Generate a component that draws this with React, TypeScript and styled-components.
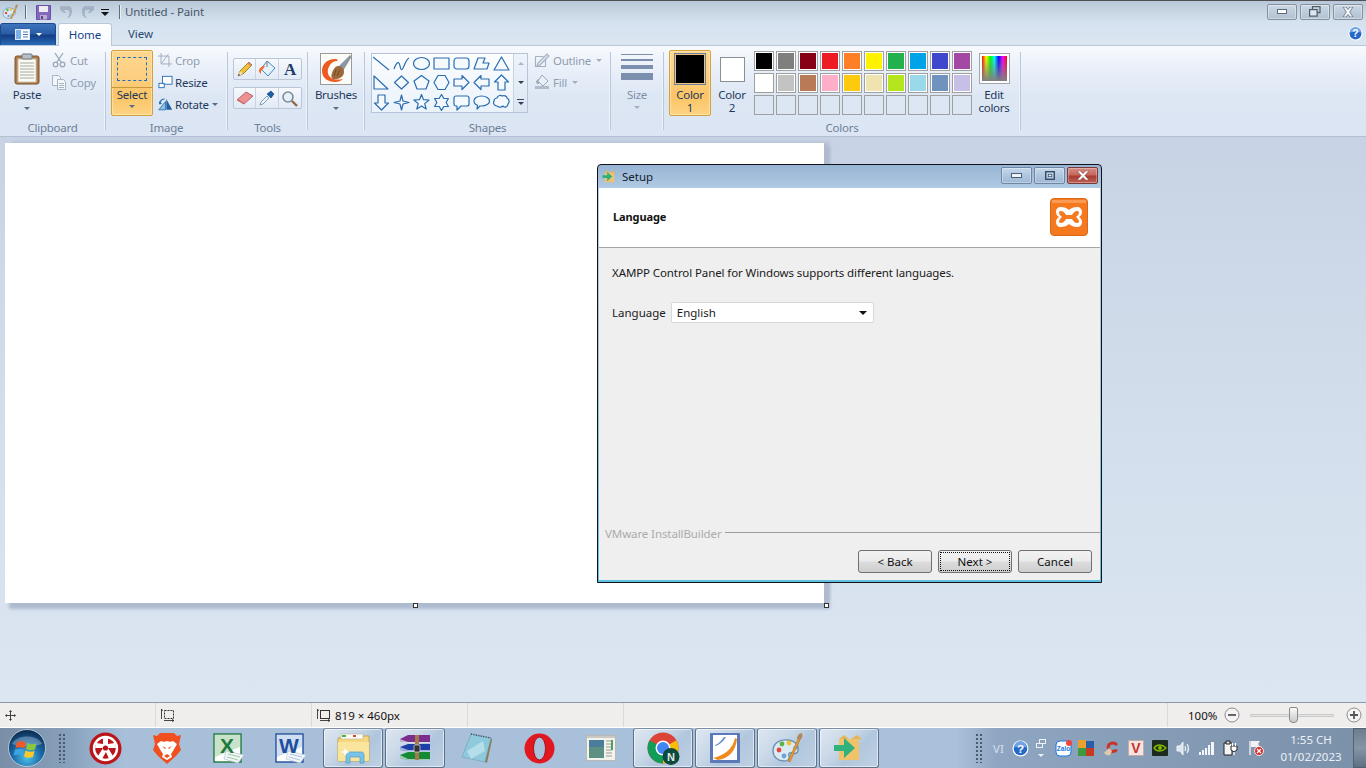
import React from "react";
import styled, { createGlobalStyle } from "styled-components";

const Global = createGlobalStyle`
  html, body { margin: 0; padding: 0; width: 1366px; height: 768px; overflow: hidden; }
  body { font-family: "Noto Sans", "Open Sans", sans-serif; font-size: 11.5px; color: #1e395b; }
  * { box-sizing: border-box; }
  svg { display: block; flex: none; }
`;

const Page = styled.div`
  position: relative; width: 1366px; height: 768px; display: flex; flex-direction: column; overflow: hidden;
`;

/* ---------- title bar ---------- */
const TitleBar = styled.div`
  height: 23px; flex: none; display: flex; align-items: center; padding: 0 3px 0 2px;
  border-top: 1px solid #4f5052;
  background: linear-gradient(180deg, #b9c8d9 0%, #c6d4e2 45%, #d6e2ef 100%);
`;
const QatSep = styled.div<{ $ml: number }>`
  width: 1px; height: 14px; margin-left: ${p => p.$ml}px; background: #5f6d7d; box-shadow: 1px 0 0 #e6eef6;
`;
const QatSlot = styled.div<{ $ml: number; $w?: number }>`
  margin-left: ${p => p.$ml}px; width: ${p => p.$w ?? 15}px; display: flex; justify-content: center;
`;
const WindowTitle = styled.div`
  margin-left: 5px; font-size: 11.5px; color: #46566a; letter-spacing: -0.1px; line-height: 20px;
`;
const WinButtons = styled.div`
  margin-left: auto; display: flex; gap: 3px;
`;
const WinButton = styled.div`
  width: 30px; height: 16px; display: flex; align-items: center; justify-content: center;
  border: 1px solid #84919f; border-radius: 2px; margin-top: -1px;
  background: linear-gradient(180deg, #ccd8e5 0%, #bdcbda 50%, #b2c1d2 100%);
  box-shadow: inset 0 0 0 1px rgba(255,255,255,.35);
`;

/* ---------- tabs ---------- */
const TabRow = styled.div`
  height: 23px; flex: none; display: flex; align-items: flex-end; position: relative;
  background: linear-gradient(180deg, #d6e2ef, #dbe6f3);
  border-bottom: 1px solid #b9c7d9;
`;
const AppButton = styled.div`
  width: 56px; height: 22px; display: flex; align-items: center; justify-content: center; gap: 6px;
  border: 1px solid #1a4a8c; border-bottom: none; border-radius: 3px 3px 0 0;
  background: linear-gradient(180deg, #3c74bd 0%, #2a5da6 45%, #143f87 55%, #2a6bb8 100%);
`;
const HomeTab = styled.div`
  width: 54px; height: 23px; margin: 0 0 -1px 2px; text-align: center; line-height: 22px;
  font-size: 11.5px; color: #15428b; border: 1px solid #b9c7d9; border-bottom: none; border-radius: 3px 3px 0 0;
  background: linear-gradient(180deg, #fff, #f5f9fe);
`;
const ViewTab = styled.div`
  width: 57px; height: 22px; text-align: center; line-height: 22px; font-size: 11.5px; color: #2c4a70;
`;
const HelpSlot = styled.div`
  position: absolute; right: 3px; top: 3px;
`;

/* ---------- ribbon ---------- */
const Ribbon = styled.div`
  height: 91px; flex: none; display: flex; padding-top: 4px; overflow: hidden; letter-spacing: -0.25px;
  background: linear-gradient(180deg, #f7fafe 0%, #eaf0f9 25%, #dde7f4 55%, #dbe5f3 100%);
  border-bottom: 1px solid #b3c0d2;
`;
const Group = styled.div<{ $w: number }>`
  position: relative; width: ${p => p.$w}px; flex: none; height: 85px; display: grid; grid-template-rows: 71px 14px;
  &::after {
    content: ""; position: absolute; right: 0; top: 2px; width: 1px; height: 78px; background: #b9c8da; box-shadow: -1px 0 0 #eef3fa;
  }
`;
const GroupBody = styled.div<{ $pl?: number }>`
  display: flex; align-items: flex-start; padding-left: ${p => p.$pl ?? 0}px;
`;
const GroupLabel = styled.div`
  text-align: center; font-size: 11.5px; line-height: 14px; color: #6d7f97; padding-right: 1px; overflow: hidden;
`;
const LargeButton = styled.div<{ $w: number; $ml?: number; $muted?: boolean }>`
  width: ${p => p.$w}px; margin-left: ${p => p.$ml ?? 0}px; height: 66px; padding-top: 3px;
  display: flex; flex-direction: column; align-items: center;
  color: ${p => (p.$muted ? "#7e8ea6" : "#1e395b")};
`;
const LargeIcon = styled.div<{ $h?: number }>`
  height: ${p => p.$h ?? 32}px; display: flex; align-items: flex-start; justify-content: center;
`;
const LargeLabel = styled.div<{ $mt?: number }>`
  margin-top: ${p => p.$mt ?? 3}px; font-size: 11.5px; line-height: 14px; text-align: center; white-space: nowrap;
`;
const Caret = styled.div<{ $c?: string; $mt?: number; $ml?: number }>`
  width: 0; height: 0; flex: none; margin-top: ${p => p.$mt ?? 5}px; margin-left: ${p => p.$ml ?? 0}px;
  border-left: 3px solid transparent; border-right: 3px solid transparent; border-top: 3px solid ${p => p.$c ?? "#5a6d88"};
`;
const SmallCol = styled.div<{ $ml: number; $w: number }>`
  margin: -1px 0 0 ${p => p.$ml}px; width: ${p => p.$w}px; display: flex; flex-direction: column;
`;
const SmallRow = styled.div<{ $off?: boolean; $gap?: number }>`
  height: 22px; display: flex; align-items: center; gap: ${p => p.$gap ?? 3}px; font-size: 11.5px;
  color: ${p => (p.$off ? "#8f9db1" : "#1e395b")};
`;
const SmallIcon = styled.div`
  width: 18px; display: flex; justify-content: center; flex: none;
`;
const ActiveButton = styled.div<{ $w: number; $ml: number }>`
  width: ${p => p.$w}px; margin-left: ${p => p.$ml}px; height: 66px; display: flex; flex-direction: column; align-items: center;
  border: 1px solid #d3a23c; border-radius: 2px; color: #1e395b;
  background: linear-gradient(180deg, #fdd78d 0%, #fdcf82 40%, #fbc465 70%, #fdd382 100%);
  box-shadow: inset 0 0 0 1px rgba(255,236,190,.6);
`;
const SelectPreview = styled.div`
  width: 30px; height: 24px; margin-top: 6px; border: 1px dashed #1f6fc0;
`;
const SelectSplit = styled.div`
  width: 100%; height: 1px; margin-top: 6px; background: #c9983a;
`;
const ToolCol = styled.div`
  margin: 8px 0 0 5px; display: flex; flex-direction: column; gap: 7px;
`;
const ToolStrip = styled.div`
  width: 69px; height: 22px; display: grid; grid-template-columns: repeat(3, 1fr);
  border: 1px solid #b9c6d8; border-radius: 2px;
  background: linear-gradient(180deg, #f6f9fd, #e2eaf5);
`;
const ToolCell = styled.div`
  display: flex; align-items: center; justify-content: center; border-right: 1px solid #c9d4e3;
  &:last-child { border-right: none; }
`;
const Gallery = styled.div`
  margin: 3px 0 0 6px; width: 157px; height: 60px; display: flex; border: 1px solid #b6c5d9; background: #f2f7fc;
`;
const ShapeGrid = styled.div`
  width: 141px; display: grid; grid-template-columns: repeat(7, 20px); grid-auto-rows: 19.3px;
  background: linear-gradient(180deg, #fbfdff, #eaf2fa);
`;
const ShapeCell = styled.div`
  display: flex; align-items: center; justify-content: center; padding-right: 2px;
`;
const GalleryScroll = styled.div`
  flex: 1; display: grid; grid-template-rows: 1fr 1fr 1fr; border-left: 1px solid #c6d3e3;
  background: linear-gradient(180deg, #eef3fa, #dce6f3);
`;
const ScrollCell = styled.div`
  display: flex; flex-direction: column; gap: 1px; align-items: center; justify-content: center;
`;
const ScrollUp = styled.div`
  width: 0; height: 0; border-left: 3px solid transparent; border-right: 3px solid transparent; border-bottom: 3px solid #a9b5c6;
`;
const ScrollBar = styled.div`
  width: 7px; height: 1px; background: #3a4a60;
`;
const SizeLines = styled.div`
  width: 32px; height: 32px; display: flex; flex-direction: column; gap: 4px; padding-top: 1px;
`;
const SizeLine = styled.div<{ $h: number }>`
  height: ${p => p.$h}px; background: #7c8fae;
`;
const ColorOneSwatch = styled.div`
  width: 32px; height: 32px; margin-top: 2px; background: #000; border: 1px solid #6e7fa0; box-shadow: inset 0 0 0 1px #e8c27a;
`;
const ColorTwoSwatch = styled.div`
  width: 25px; height: 25px; margin-top: 4px; background: #fff; border: 1px solid #8a8f96;
`;
const TwoLine = styled.div<{ $mt: number }>`
  margin-top: ${p => p.$mt}px; font-size: 11.5px; line-height: 13px; text-align: center;
`;
const Palette = styled.div`
  margin: 1px 0 0 3px; display: grid; grid-template-columns: repeat(10, 20px); grid-auto-rows: 20px; gap: 2px;
`;
const Swatch = styled.div<{ $c?: string }>`
  border: 1px solid #a0a0a0; padding: 1px; background: ${p => (p.$c ? "#fff" : "transparent")};
  &::after { content: ""; display: block; width: 100%; height: 100%; background: ${p => p.$c ?? "transparent"}; }
`;
const EditPreview = styled.div`
  width: 29px; height: 29px; border: 2px solid #fff; outline: 1px solid #a2a6ab; margin-top: 1px;
  background:
    linear-gradient(180deg, rgba(128,128,128,0) 0%, rgba(128,128,128,1) 100%),
    linear-gradient(90deg, #f00, #ff0, #0f0, #0ff, #00f, #f0f, #f00);
`;

/* ---------- workspace ---------- */
const Workspace = styled.div`
  flex: 1; position: relative; padding: 6px 5px;
  background: linear-gradient(180deg, #c7d3e4 0%, #d3deec 50%, #dce6f2 100%);
`;
const Paper = styled.div`
  position: relative; width: 819px; height: 460px; background: #fff;
  box-shadow: 5px 5px 3px 1px #aebace, 6px -2px 3px -1px #b3bfd2;
`;
const Handle = styled.div<{ $x: number }>`
  position: absolute; left: ${p => p.$x}px; bottom: -5px; width: 5px; height: 5px; background: #fff; border: 1px solid #333;
`;

/* ---------- dialog (a window on the desktop) ---------- */
const Dialog = styled.div`
  position: absolute; left: 597px; top: 164px; width: 505px; height: 419px; display: flex; flex-direction: column;
  border: 1px solid #101418; border-radius: 4px 4px 0 0; padding: 0 1px 2px 1px;
  background: linear-gradient(180deg, #97b4d3 0%, #b3cce6 6%, #8fc3de 60%, #5fc0e0 100%);
`;
const DialogTitle = styled.div`
  height: 23px; flex: none; display: flex; align-items: center; padding-left: 3px; font-size: 11.5px; color: #14202e;
`;
const DialogTitleText = styled.div`
  margin-left: 5px;
`;
const DlgButtons = styled.div`
  margin-left: auto; margin-right: 2px; margin-top: -2px; display: flex; gap: 2px;
`;
const DlgButton = styled.div<{ $close?: boolean }>`
  width: 31px; height: 17px; display: flex; align-items: center; justify-content: center;
  border: 1px solid ${p => (p.$close ? "#7a3a3a" : "#6f87a3")}; border-radius: 2px;
  background: ${p => p.$close
    ? "linear-gradient(180deg, #d68c84 0%, #c5675d 45%, #a83c33 55%, #bd6257 100%)"
    : "linear-gradient(180deg, #c7d8ea 0%, #aec6df 50%, #9fb9d6 100%)"};
  box-shadow: inset 0 0 0 1px rgba(255,255,255,.3);
`;
const DialogHeader = styled.div`
  height: 60px; flex: none; display: flex; align-items: center; justify-content: space-between; padding: 0 12px 2px 14px;
  background: #fff; border-bottom: 1px solid #a6a6a6;
`;
const HeaderTitle = styled.div`
  font-weight: 700; font-size: 11px; color: #111; letter-spacing: -0.1px;
`;
const DialogBody = styled.div`
  flex: 1; display: flex; flex-direction: column; background: #efefef; color: #1a1a1a; font-size: 11.5px; padding: 17px 0 0 13px;
`;
const BodyText = styled.div`
  line-height: 16px; letter-spacing: -0.1px;
`;
const FormRow = styled.div`
  margin-top: 21px; display: flex; align-items: center; gap: 5px; height: 21px;
`;
const Select = styled.div`
  width: 203px; height: 21px; padding: 0 6px 0 5px; display: flex; align-items: center; justify-content: space-between;
  background: #fff; border: 1px solid #d8d8d8; border-radius: 2px;
`;
const SelectCaret = styled.div`
  width: 0; height: 0; border-left: 4px solid transparent; border-right: 4px solid transparent; border-top: 4px solid #111;
`;
const Brand = styled.div`
  margin-top: auto; margin-left: -7px; display: flex; align-items: center; gap: 3px; height: 16px;
  color: #ababab; font-size: 11.5px; letter-spacing: -0.1px;
`;
const BrandRule = styled.div`
  flex: 1; height: 1px; background: #9c9c9c; margin-top: -2px;
`;
const DialogActions = styled.div`
  display: flex; justify-content: flex-end; gap: 6px; padding: 9px 8px 7px 0; height: 39px;
`;
const DlgAction = styled.div<{ $focus?: boolean }>`
  position: relative; width: 74px; height: 23px; display: flex; align-items: center; justify-content: center;
  border: 1px solid #707070; border-radius: 3px; color: #111; font-size: 11.5px;
  background: linear-gradient(180deg, #f2f2f2 0%, #ebebeb 48%, #dcdcdc 52%, #cfcfcf 100%);
  ${p => p.$focus ? `&::after { content: ""; position: absolute; inset: 1px; border: 1px dotted #111; }` : ""}
`;

/* ---------- status bar ---------- */
const StatusBar = styled.div`
  height: 26px; flex: none; display: flex; background: #f0eded; border-top: 1px solid #8d98a8; border-bottom: 1px solid #fff;
`;
const StatusCell = styled.div<{ $w: number }>`
  width: ${p => p.$w}px; flex: none; display: flex; align-items: center; gap: 4px; padding-left: 5px;
  border-right: 1px solid #dcd9d9; color: #111; font-size: 11.5px;
`;
const ZoomWrap = styled.div`
  flex: 1; display: flex; align-items: center; padding-left: 20px; color: #111; font-size: 11.5px;
`;
const ZoomTrack = styled.div`
  position: relative; width: 84px; height: 3px; margin: 0 12px 0 10px; background: #e6e6e6; border: 1px solid #c9c9c9; border-radius: 1px;
`;
const ZoomThumb = styled.div`
  position: absolute; left: 38px; top: -8px; width: 9px; height: 16px; border: 1px solid #8a8a8a; border-radius: 2px 2px 4px 4px;
  background: linear-gradient(180deg, #fafafa, #c9c9c9);
`;

/* ---------- taskbar ---------- */
const Taskbar = styled.div`
  position: relative; height: 40px; flex: none; display: flex; align-items: stretch;
  background: linear-gradient(90deg, #7a8ea6 0%, #87a0bb 5%, #a7bfd9 9%, #a9c1da 70%, #8ea6c1 73%, #7b90a9 100%);
`;
const StartArea = styled.div`
  width: 74px; flex: none; display: flex; align-items: center; padding-left: 8px;
`;
const Gripper = styled.div<{ $ml: number }>`
  margin-left: ${p => p.$ml}px; width: 8px; height: 30px; flex: none; align-self: center;
  background-image: radial-gradient(circle, #4a5a6e 1px, transparent 1.2px);
  background-size: 4px 4px;
`;
const TaskSlot = styled.div<{ $open?: boolean }>`
  width: 60px; margin: 0 1px; flex: none; display: flex; align-items: center; justify-content: center;
  ${p => p.$open ? `
    border: 1px solid #5f7186; border-top-color: #7d8ea2; border-radius: 3px; box-shadow: inset 0 0 0 1px rgba(255,255,255,.55);
    background: linear-gradient(135deg, rgba(255,255,255,.62) 0%, rgba(255,255,255,.35) 40%, rgba(255,255,255,.1) 60%, rgba(255,255,255,.25) 100%);
  ` : ""}
`;
const Tray = styled.div`
  margin-left: auto; display: flex; align-items: center; color: #e8eef5;
`;
const TrayItem = styled.div<{ $w: number }>`
  width: ${p => p.$w}px; flex: none; display: flex; align-items: center; justify-content: center;
`;
const TrayText = styled.div`
  font-size: 11.5px; color: #d5dfe9;
`;
const TrayStack = styled.div`
  display: flex; flex-direction: column; align-items: center; gap: 6px;
`;
const Clock = styled.div`
  width: 84px; flex: none; text-align: center; font-size: 11.5px; line-height: 17px; color: #eaf0f6;
`;
const ShowDesktop = styled.div`
  width: 13px; align-self: stretch; flex: none; border: 1px solid #55626f; border-right: none;
  background: linear-gradient(180deg, #6b7e90, #8495a6 50%, #5d7083);
`;

/* ---------- icons ---------- */
const BLUE = "#2a6db0";
const Clip = () => (
  <svg width="28" height="32" viewBox="0 0 28 32">
    <rect x="2" y="3" width="24" height="28" rx="2" fill="#b07a4a" stroke="#7a5530" />
    <rect x="5" y="6" width="18" height="23" fill="#fbfbf6" stroke="#c9c2b0" />
    {[10, 13, 16, 19, 22, 25].map(y => <path key={y} d={`M7 ${y}h14`} stroke="#a8a8a0" />)}
    <rect x="9" y="1" width="10" height="5" rx="1" fill="#b9bfc6" stroke="#6e7680" />
  </svg>
);
const Scissors = () => (
  <svg width="14" height="16" viewBox="0 0 14 16" fill="none" stroke="#9aa7b8" strokeWidth="1.3">
    <path d="M3 1l6 9M11 1L5 10" /><circle cx="3.5" cy="12.5" r="2.3" /><circle cx="10.5" cy="12.5" r="2.3" />
  </svg>
);
const CopyIcon = () => (
  <svg width="16" height="16" viewBox="0 0 16 16" fill="#f2f5f9" stroke="#a9b4c3">
    <path d="M1.5 1.5h6l2 2v8h-8z" /><path d="M6.5 5.5h6l2 2v8h-8z" />
    <path d="M8 9.5h5M8 11.5h5M8 13.5h5" />
  </svg>
);
const CropIcon = () => (
  <svg width="14" height="14" viewBox="0 0 16 16" fill="none" stroke="#9aa7b8" style={{ marginRight: 2 }}>
    <path d="M3.5 0v12.5H16M0 3.5h12.5V16M12 1L4 12" />
  </svg>
);
const ResizeIcon = () => (
  <svg width="15" height="14" viewBox="0 0 16 16" fill="#fff" stroke="#1f66ad" style={{ marginRight: 2 }}>
    <rect x="4.5" y="1.5" width="11" height="9" /><rect x="0.5" y="9.5" width="6" height="5" />
  </svg>
);
const RotateIcon = () => (
  <svg width="15" height="14" viewBox="0 0 18 16" style={{ marginRight: 2 }}>
    <path d="M1 15L9 5v10z" fill="#8fc0e6" stroke="#2a6db0" />
    <path d="M10 15V2l7 13z" fill="#1f5f9f" />
    <path d="M2 8C2 4 5 2 8 2" stroke="#2a6db0" fill="none" strokeWidth="1.4" />
    <path d="M1 5l1 4 3-2z" fill="#2a6db0" />
  </svg>
);
const Pencil = () => (
  <svg width="16" height="16" viewBox="0 0 16 16">
    <path d="M1 15l2-5L12 1l3 3-9 9z" fill="#f2c230" stroke="#8a6d22" strokeWidth=".8" />
    <path d="M1 15l2-5 3 3z" fill="#f3dfbb" /><path d="M1 15l1-2 1 1z" fill="#222" />
    <path d="M12 1l3 3-1.4 1.4-3-3z" fill="#d9826e" />
  </svg>
);
const Bucket = () => (
  <svg width="18" height="18" viewBox="0 0 18 18">
    <path d="M9 1l8 7-7 8-7-7z" fill="#e4f0fa" stroke="#4a86bd" />
    <path d="M1 11c0-3 3-5 6-5l-2 3-2 2v3c-1-1-2-2-2-3z" fill="#f2672a" />
    <path d="M9 1v6" stroke="#6f7f90" />
  </svg>
);
const LetterA = () => (
  <svg width="18" height="18" viewBox="0 0 18 18">
    <text x="9" y="15" textAnchor="middle" fontFamily="Liberation Serif, serif" fontWeight="700" fontSize="17" fill="#1e3a68">A</text>
  </svg>
);
const Eraser = () => (
  <svg width="18" height="14" viewBox="0 0 18 14">
    <path d="M1 9l9-8 7 4-9 8z" fill="#ee8f92" stroke="#b5676c" />
    <path d="M1 9l7 4v-1L1.5 8z" fill="#c96a6e" />
  </svg>
);
const Dropper = () => (
  <svg width="16" height="16" viewBox="0 0 16 16">
    <path d="M1 15l1-3 6-6 2 2-6 6z" fill="#eef6fc" stroke="#7d9cb8" />
    <path d="M8 4l4-3 3 3-3 4z" fill="#1d5fa8" stroke="#123f76" strokeWidth=".6" />
  </svg>
);
const Magnifier = () => (
  <svg width="17" height="17" viewBox="0 0 17 17">
    <circle cx="7" cy="7" r="5" fill="#e4f0f8" stroke="#7d8b99" strokeWidth="1.6" />
    <path d="M11 11l5 5" stroke="#8a6a44" strokeWidth="2.4" />
  </svg>
);
const Brushes = () => (
  <svg width="32" height="32" viewBox="0 0 32 32">
    <rect x=".5" y=".5" width="31" height="31" fill="#fbfbf8" stroke="#9a9a9a" />
    <path d="M15 6C7 6 2 11 2 18c0 7 6 11 13 11 3 0 6-1 8-3-5 1-10 1-13-2-3-3-3-8 0-12 2-3 4-4 7-4 1 0 1-2-2-2z" fill="#ee5b20" />
    <path d="M18 14L30 2l1.500 2L23 18z" fill="#8b97a5" />
    <path d="M18 13c3 0 6 2 6 6 0 5-6 8-11 7-2-1-2-3-1-6s3-7 6-7z" fill="#9c6a3a" />
    <path d="M16 17l-2 6M20 17l-3 6" stroke="#6e4620" strokeWidth=".9" />
  </svg>
);
const OutlineIcon = () => (
  <svg width="16" height="16" viewBox="0 0 16 16" fill="none" stroke="#a3b0c1" strokeWidth="1.1">
    <path d="M1.5 4.5h8M1.5 4.5v10h10v-7" /><path d="M3 14l1-3 9-9 2 2-9 9z" fill="#dde5ef" />
  </svg>
);
const FillIcon = () => (
  <svg width="16" height="16" viewBox="0 0 16 16">
    <path d="M1 15h14v-3H1z" fill="#b0bccb" /><path d="M8 1l6 6-5 5-5-5z" fill="#e9eff6" stroke="#9aa8ba" />
    <path d="M2 8c0-2 2-3 3-3v5c-2 0-3 0-3-2z" fill="#a3b0c1" />
  </svg>
);
const AppMenu = () => (
  <svg width="15" height="11" viewBox="0 0 15 11">
    <rect x=".5" y=".5" width="14" height="10" fill="#fff" stroke="#dce8f5" />
    <rect x="1" y="1" width="5" height="9" fill="#7fb0e5" />
    <path d="M8 3h5M8 5.5h5M8 8h5" stroke="#4e78ad" />
  </svg>
);
const PaintApp = ({ s = 16 }: { s?: number }) => (
  <svg width={s} height={s} viewBox="0 0 32 32">
    <path d="M2 19C2 11 9 7 17 8c8 1 11 6 10 11-1 3-4 3-6 2-3-1-4 1-3 3 1 3-1 5-5 5C7 29 2 25 2 19z" fill="#dbe9f3" stroke="#6b93b5" strokeWidth="1.4" />
    <circle cx="8" cy="18" r="2.4" fill="#e0483f" /><circle cx="11" cy="12" r="2.4" fill="#59b24a" />
    <circle cx="18" cy="11" r="2.4" fill="#efc22d" /><circle cx="24" cy="16" r="1.8" fill="#4f8fd0" />
    <circle cx="13" cy="24" r="2.4" fill="#6aa5d5" />
    <path d="M17 29L27 7l2 1-10 22z" fill="#e79a2b" stroke="#a5681a" strokeWidth=".5" />
    <path d="M26 7c0-3 2-6 5-6 1 3 0 6-2 7z" fill="#b08a5c" />
  </svg>
);
const Save = () => (
  <svg width="15" height="15" viewBox="0 0 15 15">
    <path d="M.5.5h14v14H.5z" fill="#8468bd" stroke="#6a50a3" />
    <rect x="3" y="1" width="9" height="6" fill="#efeaf7" />
    <rect x="4" y="10" width="7" height="4.5" fill="#b9adcf" /><rect x="5" y="11" width="2" height="3" fill="#5b458f" />
  </svg>
);
const Undo = ({ flip }: { flip?: boolean }) => (
  <svg width="14" height="14" viewBox="0 0 14 14" style={flip ? { transform: "scaleX(-1)" } : undefined}>
    <path d="M1 1h8c3 0 4 2 4 5 0 4-2 7-5 7 2-2 3-4 2-7-.4-1-1-1-3-1H5l2 3H5L1 5z" fill="#a3b2c5" />
  </svg>
);
const QatDrop = () => (
  <svg width="8" height="7" viewBox="0 0 8 7">
    <path d="M0 0h8v1H0zM0 3h8L4 7z" fill="#111" />
  </svg>
);
const Help = ({ s = 15 }: { s?: number }) => (
  <svg width={s} height={s} viewBox="0 0 16 16">
    <circle cx="8" cy="8" r="7.5" fill="#fff" />
    <circle cx="8" cy="8" r="6.4" fill="#2468c8" />
    <path d="M2 7a6 6 0 0 1 12 0c-3-1-8-1-12 0z" fill="#6fa3e6" />
    <text x="8" y="12" textAnchor="middle" fontFamily="Liberation Sans, sans-serif" fontWeight="700" fontSize="11" fill="#fff">?</text>
  </svg>
);

const star = (n: number, R: number, r: number) => {
  const pts: string[] = [];
  for (let i = 0; i < n * 2; i++) {
    const a = -Math.PI / 2 + (i * Math.PI) / n;
    const q = i % 2 ? r : R;
    pts.push(`${(8.5 + q * Math.cos(a)).toFixed(1)},${(8.5 + q * Math.sin(a)).toFixed(1)}`);
  }
  return pts.join(" ");
};
const shapes: React.ReactNode[] = [
  <path d="M0 2l16 13" />,
  <path d="M1 14c3-8 5-8 6-3s2 5 4 0 3-7 5-8" />,
  <ellipse cx="8.5" cy="8.5" rx="8" ry="6" />,
  <rect x="1" y="3" width="15" height="11" />,
  <rect x="1" y="3" width="15" height="11" rx="3" />,
  <path d="M1 14L5 3h7l-2 5h6l-2 6z" />,
  <path d="M8.5 2L16 15H1z" />,
  <path d="M1 2v13h14z" />,
  <path d="M8.5 2l7 6.5-7 6.5-7-6.5z" />,
  <path d="M8.5 1.5L16 7l-3 8H4L1 7z" />,
  <path d="M5 1.500h7L16 8.500l-4 7H5l-4-7z" />,
  <path d="M1 5h8V1.500l7 7-7 7V12H1z" />,
  <path d="M16 5H8V1.500l-7 7 7 7V12h8z" />,
  <path d="M5 16V8H1.500l7-7 7 7H12v8z" />,
  <path d="M5 1v8H1.500l7 7 7-7H12V1z" />,
  <path d="M8.500 1L10 7l6 1.500-6 1.500-1.500 6L7 10l-6-1.500L7 7z" />,
  <polygon points={star(5, 8, 3.4)} />,
  <polygon points={star(6, 8, 4.6)} />,
  <path d="M3 2h11a2 2 0 0 1 2 2v6a2 2 0 0 1-2 2H8l-4 4v-4H3a2 2 0 0 1-2-2V4a2 2 0 0 1 2-2z" />,
  <path d="M8.500 2c4.400 0 8 2.200 8 5s-3.600 5-8 5H7l-3 3 .5-3.700C2.400 10.500 1 9 1 7c0-2.800 3-5 7.500-5z" />,
  <path d="M4 4c1-3 4-3 5-2 2-1 5 0 5 2 2 1 3 4 1 6 0 3-4 4-5 2-2 2-5 1-6 0-3 0-4-3-3-5 0-2 2-3 3-3z" />,
];
const Shape = ({ i }: { i: number }) => (
  <svg width="17" height="17" viewBox="0 0 17 17" fill="#f4f9fd" stroke={BLUE} strokeWidth="1.200" strokeLinejoin="round">
    {shapes[i]}
  </svg>
);

const row1 = ["#000000", "#7f7f7f", "#880015", "#ed1c24", "#ff7f27", "#fff200", "#22b14c", "#00a2e8", "#3f48cc", "#a349a4"];
const row2 = ["#ffffff", "#c3c3c3", "#b97a57", "#ffaec9", "#ffc90e", "#efe4b0", "#b5e61d", "#99d9ea", "#7092be", "#c8bfe7"];

const MoveGlyph = () => (
  <svg width="11" height="11" viewBox="0 0 11 11" fill="#333" stroke="#333" strokeWidth=".9">
    <path d="M5.500 1v9M1 5.500h9" fill="none" />
    <path d="M5.500 0l1.500 2H4zM5.500 11l1.500-2H4zM0 5.500L2 4v3zM11 5.500L9 4v3z" stroke="none" />
  </svg>
);
const SelGlyph = ({ dashed }: { dashed?: boolean }) => (
  <svg width="14" height="13" viewBox="0 0 14 13" fill="none" stroke="#333">
    <rect x="3.500" y="1.500" width="9" height="8" strokeDasharray={dashed ? "2 1" : undefined} />
    <path d="M.5 0v10M0 2l.5-2 1 2M3 11.500h10M11 10.500l2 1-2 1" strokeWidth=".9" />
  </svg>
);

/* taskbar logos */
const Orb = () => (
  <svg width="38" height="38" viewBox="0 0 38 38">
    <defs>
      <radialGradient id="orbG" cx="50%" cy="75%" r="70%">
        <stop offset="0" stopColor="#4fc3ea" /><stop offset=".55" stopColor="#1a6aa8" /><stop offset="1" stopColor="#0d2f55" />
      </radialGradient>
    </defs>
    <circle cx="19" cy="19" r="18.500" fill="url(#orbG)" stroke="#c9d7e4" strokeWidth=".8" />
    <path d="M4 15c4-10 26-10 30 0-8 3-22 3-30 0z" fill="#ffffff" opacity=".28" />
    <path d="M9 13c3-1 6-1 9 .5l-1.500 6c-3-1.500-6-1.500-9-.5z" fill="#ef5a2a" />
    <path d="M19.500 14c3 1.500 6 1.500 9 .5l-1.500 6c-3 1-6 1-9-.5z" fill="#8cc63f" />
    <path d="M7 20.500c3-1 6-1 9 .5l-1.500 6c-3-1.500-6-1.500-9-.5z" fill="#3da3e0" />
    <path d="M17.500 21.500c3 1.500 6 1.500 9 .5l-1.500 6c-3 1-6 1-9-.5z" fill="#fbc92c" />
  </svg>
);
const RedCircle = () => (
  <svg width="33" height="33" viewBox="0 0 33 33">
    <circle cx="16.500" cy="16.500" r="16" fill="#bb1519" />
    <circle cx="16.500" cy="16.500" r="11.500" fill="none" stroke="#fff" strokeWidth="2.400" />
    <path d="M14 5h5v7l7-1 1 5h-8l5 8-4 3-3-7-4 7-4-3 5-8H6l1-5 7 1z" fill="#fff" />
    <circle cx="16.500" cy="16" r="2.600" fill="#bb1519" />
  </svg>
);
const Brave = () => (
  <svg width="28" height="32" viewBox="0 0 28 32">
    <path d="M7 1h14l3 3 4-1-2 9 2 6-5 6-9 8-9-8-5-6 2-6-2-9 4 1z" fill="#f0501f" />
    <path d="M8 9c2 1 4 1 6 0 2 1 4 1 6 0l4 3-4 7-2 3 1 3-5 3-5-3 1-3-2-3-4-7z" fill="#fff" />
    <path d="M9 14l4 2-1 1zM19 14l-4 2 1 1zM11 24l3-2 3 2-3 2z" fill="#f0501f" />
  </svg>
);
const OfficeDoc = ({ letter, c, c2 }: { letter: string; c: string; c2: string }) => (
  <svg width="32" height="31" viewBox="0 0 32 31">
    <rect x="1" y="1" width="27" height="28" fill="#fff" stroke={c} strokeWidth="1.400" />
    <path d="M2 2h25v12L2 24z" fill={c2} opacity=".55" />
    <path d="M13 18l18 4-6 8-14-4z" fill="#f3f6f8" stroke="#b9c5cf" strokeWidth=".7" />
    <path d="M15 21l12 3M14 24l11 3" stroke={c2} />
    <text x="14" y="20" textAnchor="middle" fontFamily="Liberation Sans, sans-serif" fontWeight="700" fontSize="21" fill={c}>{letter}</text>
  </svg>
);
const Folder = () => (
  <svg width="33" height="31" viewBox="0 0 33 31">
    <path d="M1 5h9l2-2h20v25H1z" fill="#f5d77e" stroke="#c9a64a" />
    <rect x="4" y="1" width="22" height="5" fill="#fdfdf5" stroke="#b9b39a" strokeWidth=".6" />
    <rect x="5" y="2" width="4" height="2" fill="#4bb04a" /><rect x="16" y="2" width="3" height="2" fill="#d8483a" />
    <path d="M1 9h31v19H1z" fill="#fbe7a3" opacity=".9" />
    <path d="M9 30v-8c0-2 1-3 3-3h12c2 0 3 1 3 3v8h-4v-6H13v6z" fill="#79c4e6" stroke="#4a9ac4" strokeWidth=".7" />
    <path d="M8 15l2 3 3 1-3 1-2 3-1-3-3-1 3-1z" fill="#fff" />
  </svg>
);
const WinRar = () => (
  <svg width="32" height="26" viewBox="0 0 32 26">
    <path d="M1 4l8-4h22v7H9L1 7z" fill="#7b2e8c" />
    <path d="M1 12l8-3h22v7H9l-8-1z" fill="#1c3fa8" /><path d="M1 20l8-3h22v8H9l-8-2z" fill="#148a34" />
    <path d="M1 4v3l8 1h22v-1H9zM1 12v3l8 1h22v-1H9zM1 20v3l8 2h22v-1H9z" fill="#dfe3ea" opacity=".7" />
    <rect x="16" y="0" width="4" height="25" fill="#a47a4a" /><rect x="15" y="10" width="6" height="7" rx="1" fill="#333" stroke="#ddd" strokeWidth=".7" />
  </svg>
);
const Notepad = () => (
  <svg width="32" height="30" viewBox="0 0 32 30">
    <path d="M10 1l20 4-6 24L1 24z" fill="#8ec9dc" stroke="#6c9fb3" strokeWidth=".6" />
    <path d="M24 29l6-24 1 2-5 23z" fill="#8a7d5a" />
    <path d="M10 1l20 4" stroke="#445" strokeWidth="1.500" strokeDasharray="1 1.500" />
    <path d="M6 18L22 8l2 10-14 8z" fill="#d0ecf3" opacity=".6" />
  </svg>
);
const Opera = () => (
  <svg width="31" height="31" viewBox="0 0 31 31">
    <ellipse cx="15.500" cy="15.500" rx="15" ry="15" fill="#e2171f" />
    <ellipse cx="15.500" cy="15.500" rx="6" ry="11.500" fill="#a9c1da" />
    <ellipse cx="15.500" cy="15.500" rx="6" ry="11.500" fill="none" stroke="#a80f16" strokeWidth="1" />
  </svg>
);
const WindowApp = () => (
  <svg width="30" height="26" viewBox="0 0 30 26">
    <rect x=".5" y=".5" width="29" height="25" fill="#f3f3ee" stroke="#b9b9b2" />
    <rect x="1" y="1" width="28" height="2" fill="#c9c9c2" />
    <path d="M3 5h15v18H3z" fill="#5d8f82" /><path d="M3 5h15v7H3z" fill="#4a7c9c" />
    <path d="M20 6h6M20 9h6M20 12h6M20 15h6M20 18h6M20 21h6" stroke="#9a9a92" />
    <rect x="25" y="5" width="2" height="10" fill="#4ca060" />
  </svg>
);
const Chrome = () => (
  <svg width="33" height="33" viewBox="0 0 33 33">
    <circle cx="16" cy="16" r="15.500" fill="#db4437" />
    <path d="M16 16L29.400 8.300A15.500 15.500 0 0 1 16 31.500z" fill="#fbbc05" />
    <path d="M16 16L16 31.500A15.500 15.500 0 0 1 2.600 8.300z" fill="#0f9d58" />
    <circle cx="16" cy="16" r="7.500" fill="#fff" /><circle cx="16" cy="16" r="6" fill="#4285f4" />
    <circle cx="24" cy="24.500" r="8.500" fill="#0d4a3e" />
    <text x="24" y="28.500" textAnchor="middle" fontFamily="Liberation Sans, sans-serif" fontWeight="700" fontSize="11" fill="#dfe8e4">N</text>
  </svg>
);
const Foxit = () => (
  <svg width="32" height="32" viewBox="0 0 32 32">
    <rect x="1" y="1" width="30" height="30" rx="1" fill="#5b78b8" />
    <rect x="4" y="3" width="24" height="25" fill="#fff" />
    <path d="M4 26C14 24 24 17 26 6l2 1c-1 11-8 20-19 21z" fill="#f08a1d" />
    <path d="M6 14c4-1 8-4 11-9l-2 0C12 9 9 12 6 13z" fill="#6c8fc5" />
  </svg>
);
const Installer = ({ s = 32 }: { s?: number }) => (
  <svg width={s} height={s * 0.85} viewBox="0 0 32 27">
    <path d="M6 5h20v21H6z" fill="#f0c36a" />
    <path d="M6 5l5-4 5 4zM18 5l6-4 5 4z" fill="#e7b557" />
    <path d="M0 10h10V3l11 10-11 10v-7H0z" fill="#2fb27c" transform="translate(1 1)" />
  </svg>
);
const XamppLogo = () => (
  <svg width="38" height="38" viewBox="0 0 38 38">
    <rect x=".5" y=".5" width="37" height="37" rx="3.500" fill="#f5791f" stroke="#d9691a" />
    <path d="M2 2h34v3H2z" fill="#fb9a52" />
    <path fill="#fff" d="M6 14c0-3 2-5 5-5 3 0 6 1 8 3 2-2 5-3 8-3 3 0 5 2 5 5 0 2-1 4-3 5 2 1 3 3 3 5 0 3-2 5-5 5-3 0-6-1-8-3-2 2-5 3-8 3-3 0-5-2-5-5 0-2 1-4 3-5-2-1-3-3-3-5z" />
    <path fill="#f5791f" d="M11 13c2 0 4 2 5 4h6c1-2 3-4 5-4 1.500 0 2 1 2 1.500 0 2-2 3.500-3 4.500 1 1 3 2.500 3 4.500 0 .5-.5 1.500-2 1.500-2 0-4-2-5-4h-6c-1 2-3 4-5 4-1.500 0-2-1-2-1.500 0-2 2-3.500 3-4.500-1-1-3-2.500-3-4.500 0-.5.5-1.500 2-1.500z" />
  </svg>
);
const Zalo = () => (
  <svg width="18" height="18" viewBox="0 0 18 18">
    <rect x="1" y="2" width="15" height="15" rx="4" fill="#fff" stroke="#1a78e0" />
    <text x="8.500" y="12" textAnchor="middle" fontFamily="Liberation Sans, sans-serif" fontWeight="700" fontSize="6.500" fill="#1a78e0">Zalo</text>
    <circle cx="14" cy="4" r="3" fill="#f0443a" />
  </svg>
);
const Avg = () => (
  <svg width="17" height="17" viewBox="0 0 17 17">
    <rect x="0" y="0" width="8" height="8" fill="#e8a22c" /><rect x="8" y="1" width="8" height="7" fill="#2a5ea8" />
    <rect x="0" y="8" width="8" height="8" fill="#3e9a3e" /><rect x="8" y="8" width="8" height="8" fill="#c43a22" />
  </svg>
);
const CCleaner = () => (
  <svg width="17" height="17" viewBox="0 0 17 17">
    <path d="M15 4C12 0 6 1 4 5c-1 4 1 8 6 8 2 0 4-1 5-3l-3-1c-1 1-2 1-3 1-2 0-3-2-2-4s4-2 6 0z" fill="#c9342a" />
    <path d="M1 13l5-5 3 3-2 4c-2 1-4 0-6-2z" fill="#e2c9a8" />
  </svg>
);
const VIcon = () => (
  <svg width="16" height="16" viewBox="0 0 16 16">
    <rect x=".5" y=".5" width="15" height="15" fill="#f4e5e2" stroke="#c9a9a5" />
    <text x="8" y="13" textAnchor="middle" fontFamily="Liberation Sans, sans-serif" fontWeight="700" fontSize="14" fill="#c9302a">V</text>
  </svg>
);
const Nvidia = () => (
  <svg width="16" height="16" viewBox="0 0 16 16">
    <rect width="16" height="16" rx="1" fill="#1d2a20" />
    <path d="M2 8c3-4 8-4 12 0-4 4-9 4-12 0z" fill="none" stroke="#7fb800" strokeWidth="1.400" />
    <circle cx="8" cy="8" r="2" fill="#7fb800" />
  </svg>
);
const Speaker = () => (
  <svg width="15" height="15" viewBox="0 0 15 15" fill="none" stroke="#f0f3f7">
    <path d="M1 5h3l3-4v13l-3-4H1z" fill="#dfe5ec" /><path d="M9 5c1 2 1 3 0 5M11 3c2 3 2 6 0 9" strokeWidth="1.200" />
  </svg>
);
const Signal = () => (
  <svg width="16" height="13" viewBox="0 0 16 13" fill="#f3f6f9">
    <rect x="0" y="10" width="2" height="3" /><rect x="3" y="8" width="2" height="5" /><rect x="6" y="6" width="2" height="7" />
    <rect x="9" y="3" width="2" height="10" /><rect x="12" y="0" width="3" height="13" />
  </svg>
);
const Plug = () => (
  <svg width="16" height="16" viewBox="0 0 16 16">
    <path d="M1 3h8v12H1z" fill="#f5f5f5" stroke="#222" /><path d="M3 1h4v3H3z" fill="#ddd" stroke="#222" />
    <path d="M8 6h6v4l-3 2-3-2z" fill="#fff" stroke="#222" /><path d="M9.500 3v3M12.500 3v3M11 12v3" stroke="#fff" strokeWidth="1.300" />
  </svg>
);
const FlagX = () => (
  <svg width="16" height="16" viewBox="0 0 16 16">
    <path d="M2 1v14" stroke="#eee" strokeWidth="1.400" /><path d="M3 1h9l-2 3 2 3H3z" fill="#f2f2f2" />
    <circle cx="11" cy="11" r="4.500" fill="#d42b2b" stroke="#eee" /><path d="M9 9l4 4M13 9l-4 4" stroke="#fff" strokeWidth="1.300" />
  </svg>
);
const TrayWindows = () => (
  <svg width="10" height="9" viewBox="0 0 10 9" fill="none" stroke="#eef2f6">
    <rect x="3.500" y=".5" width="6" height="4" /><rect x=".5" y="4.500" width="6" height="4" />
  </svg>
);

export default function App() {
  return (
    <Page>
      <Global />
      <TitleBar>
        <PaintApp />
        <QatSep $ml={7} />
        <QatSlot $ml={10}><Save /></QatSlot>
        <QatSlot $ml={7}><Undo /></QatSlot>
        <QatSlot $ml={7}><Undo flip /></QatSlot>
        <QatSlot $ml={2} $w={16}><QatDrop /></QatSlot>
        <QatSep $ml={6} />
        <WindowTitle>Untitled - Paint</WindowTitle>
        <WinButtons>
          <WinButton><svg width="10" height="5" viewBox="0 0 10 5"><rect x=".5" y=".5" width="9" height="4" fill="#fff" stroke="#5d6b7a" /></svg></WinButton>
          <WinButton><svg width="12" height="11" viewBox="0 0 12 11" fill="none" stroke="#4d5a68" strokeWidth="1.200"><rect x="3.500" y=".6" width="7.500" height="6" /><rect x=".6" y="3.600" width="7.500" height="6.500" fill="#dfe6ee" /></svg></WinButton>
          <WinButton><svg width="12" height="10" viewBox="0 0 12 10"><path d="M1 0h3l2 2.500L8 0h3L7.700 5 11 10H8L6 7.500 4 10H1l3.300-5z" fill="#f5f7f9" stroke="#5d6b7a" strokeWidth=".8" /></svg></WinButton>
        </WinButtons>
      </TitleBar>

      <TabRow>
        <AppButton>
          <AppMenu />
          <Caret $c="#fff" $mt={0} />
        </AppButton>
        <HomeTab>Home</HomeTab>
        <ViewTab>View</ViewTab>
        <HelpSlot><Help /></HelpSlot>
      </TabRow>

      <Ribbon>
        <Group $w={106}>
          <GroupBody $pl={5}>
            <LargeButton $w={44}>
              <LargeIcon><Clip /></LargeIcon>
              <LargeLabel>Paste</LargeLabel>
              <Caret />
            </LargeButton>
            <SmallCol $ml={1} $w={52}>
              <SmallRow $off $gap={2}><SmallIcon><Scissors /></SmallIcon>Cut</SmallRow>
              <SmallRow $off $gap={2}><SmallIcon><CopyIcon /></SmallIcon>Copy</SmallRow>
            </SmallCol>
          </GroupBody>
          <GroupLabel>Clipboard</GroupLabel>
        </Group>

        <Group $w={122}>
          <GroupBody $pl={5}>
            <ActiveButton $w={42} $ml={0}>
              <SelectPreview />
              <SelectSplit />
              <LargeLabel $mt={0}>Select</LargeLabel>
              <Caret $mt={3} />
            </ActiveButton>
            <SmallCol $ml={4} $w={68}>
              <SmallRow $off $gap={0}><SmallIcon><CropIcon /></SmallIcon>Crop</SmallRow>
              <SmallRow $gap={0}><SmallIcon><ResizeIcon /></SmallIcon>Resize</SmallRow>
              <SmallRow $gap={0}><SmallIcon><RotateIcon /></SmallIcon>Rotate<Caret $mt={0} $ml={3} /></SmallRow>
            </SmallCol>
          </GroupBody>
          <GroupLabel>Image</GroupLabel>
        </Group>

        <Group $w={80}>
          <GroupBody>
            <ToolCol>
              <ToolStrip>
                <ToolCell><Pencil /></ToolCell>
                <ToolCell><Bucket /></ToolCell>
                <ToolCell><LetterA /></ToolCell>
              </ToolStrip>
              <ToolStrip>
                <ToolCell><Eraser /></ToolCell>
                <ToolCell><Dropper /></ToolCell>
                <ToolCell><Magnifier /></ToolCell>
              </ToolStrip>
            </ToolCol>
          </GroupBody>
          <GroupLabel>Tools</GroupLabel>
        </Group>

        <Group $w={57}>
          <GroupBody $pl={1}>
            <LargeButton $w={54}>
              <LargeIcon><Brushes /></LargeIcon>
              <LargeLabel>Brushes</LargeLabel>
              <Caret />
            </LargeButton>
          </GroupBody>
          <GroupLabel />
        </Group>

        <Group $w={246}>
          <GroupBody>
            <Gallery>
              <ShapeGrid>
                {shapes.map((_, i) => <ShapeCell key={i}><Shape i={i} /></ShapeCell>)}
              </ShapeGrid>
              <GalleryScroll>
                <ScrollCell><ScrollUp /></ScrollCell>
                <ScrollCell><Caret $c="#2f3f55" $mt={0} /></ScrollCell>
                <ScrollCell><ScrollBar /><Caret $c="#2f3f55" $mt={1} /></ScrollCell>
              </GalleryScroll>
            </Gallery>
            <SmallCol $ml={5} $w={76}>
              <SmallRow $off $gap={2}><SmallIcon><OutlineIcon /></SmallIcon>Outline<Caret $c="#a3b0c1" $mt={0} $ml={3} /></SmallRow>
              <SmallRow $off $gap={2}><SmallIcon><FillIcon /></SmallIcon>Fill<Caret $c="#a3b0c1" $mt={0} $ml={3} /></SmallRow>
            </SmallCol>
          </GroupBody>
          <GroupLabel>Shapes</GroupLabel>
        </Group>

        <Group $w={53}>
          <GroupBody $pl={2}>
            <LargeButton $w={48} $muted>
              <SizeLines>
                <SizeLine $h={1} /><SizeLine $h={2} /><SizeLine $h={4} /><SizeLine $h={7} />
              </SizeLines>
              <LargeLabel>Size</LargeLabel>
              <Caret $c="#a3b0c1" $mt={4} />
            </LargeButton>
          </GroupBody>
          <GroupLabel />
        </Group>

        <Group $w={357}>
          <GroupBody $pl={5}>
            <ActiveButton $w={42} $ml={0}>
              <ColorOneSwatch />
              <TwoLine $mt={3}>Color<br />1</TwoLine>
            </ActiveButton>
            <LargeButton $w={38} $ml={2}>
              <ColorTwoSwatch />
              <TwoLine $mt={6}>Color<br />2</TwoLine>
            </LargeButton>
            <Palette>
              {row1.map(c => <Swatch key={c} $c={c} />)}
              {row2.map(c => <Swatch key={c} $c={c} />)}
              {Array.from({ length: 10 }, (_, i) => <Swatch key={i} />)}
            </Palette>
            <LargeButton $w={44}>
              <EditPreview />
              <TwoLine $mt={5}>Edit<br />colors</TwoLine>
            </LargeButton>
          </GroupBody>
          <GroupLabel>Colors</GroupLabel>
        </Group>
      </Ribbon>

      <Workspace>
        <Paper>
          <Handle $x={408} />
          <Handle $x={819} />
        </Paper>
      </Workspace>

      <StatusBar>
        <StatusCell $w={156}><MoveGlyph /></StatusCell>
        <StatusCell $w={156}><SelGlyph dashed /></StatusCell>
        <StatusCell $w={156}><SelGlyph />819 × 460px</StatusCell>
        <StatusCell $w={156} />
        <StatusCell $w={544} />
        <ZoomWrap>
          100%
          <svg width="16" height="16" viewBox="0 0 16 16" style={{ marginLeft: 7 }}><circle cx="8" cy="8" r="7" fill="#f4f4f4" stroke="#8c8c8c" /><path d="M4 8h8" stroke="#555" strokeWidth="1.800" /></svg>
          <ZoomTrack><ZoomThumb /></ZoomTrack>
          <svg width="16" height="16" viewBox="0 0 16 16"><circle cx="8" cy="8" r="7" fill="#f4f4f4" stroke="#8c8c8c" /><path d="M4 8h8M8 4v8" stroke="#555" strokeWidth="1.800" /></svg>
        </ZoomWrap>
      </StatusBar>

      <Taskbar>
        <StartArea><Orb /><Gripper $ml={12} /></StartArea>
        <TaskSlot><RedCircle /></TaskSlot>
        <TaskSlot><Brave /></TaskSlot>
        <TaskSlot><OfficeDoc letter="X" c="#1f7a3d" c2="#9ccb9e" /></TaskSlot>
        <TaskSlot><OfficeDoc letter="W" c="#1f4f9c" c2="#a8c2e6" /></TaskSlot>
        <TaskSlot $open><Folder /></TaskSlot>
        <TaskSlot $open><WinRar /></TaskSlot>
        <TaskSlot><Notepad /></TaskSlot>
        <TaskSlot><Opera /></TaskSlot>
        <TaskSlot><WindowApp /></TaskSlot>
        <TaskSlot $open><Chrome /></TaskSlot>
        <TaskSlot $open><Foxit /></TaskSlot>
        <TaskSlot $open><PaintApp s={32} /></TaskSlot>
        <TaskSlot $open><Installer /></TaskSlot>
        <Tray>
          <Gripper $ml={0} />
          <TrayItem $w={31}><TrayText>VI</TrayText></TrayItem>
          <TrayItem $w={13}><Help s={17} /></TrayItem>
          <TrayItem $w={27}><TrayStack><TrayWindows /><Caret $c="#eef2f6" $mt={0} /></TrayStack></TrayItem>
          <TrayItem $w={20}><Zalo /></TrayItem>
          <TrayItem $w={24}><Avg /></TrayItem>
          <TrayItem $w={26}><CCleaner /></TrayItem>
          <TrayItem $w={24}><VIcon /></TrayItem>
          <TrayItem $w={24}><Nvidia /></TrayItem>
          <TrayItem $w={23}><Speaker /></TrayItem>
          <TrayItem $w={24}><Signal /></TrayItem>
          <TrayItem $w={24}><Plug /></TrayItem>
          <TrayItem $w={26}><FlagX /></TrayItem>
          <Clock>1:55 CH<br />01/02/2023</Clock>
          <ShowDesktop />
        </Tray>
      </Taskbar>

      <Dialog>
        <DialogTitle>
          <Installer s={15} />
          <DialogTitleText>Setup</DialogTitleText>
          <DlgButtons>
            <DlgButton><svg width="11" height="5" viewBox="0 0 11 5"><rect x=".5" y=".5" width="10" height="4" fill="#f0f4f8" stroke="#4d5f73" /></svg></DlgButton>
            <DlgButton><svg width="10" height="9" viewBox="0 0 10 9" fill="none" stroke="#33465b" strokeWidth="1.300"><rect x=".7" y=".7" width="8.600" height="7.600" /><rect x="3.300" y="3.300" width="3.400" height="2.400" fill="#f0f4f8" strokeWidth=".6" /></svg></DlgButton>
            <DlgButton $close><svg width="12" height="9" viewBox="0 0 12 9"><path d="M0 0h3.300L6 2.500 8.700 0H12L7.800 4.500 12 9H8.700L6 6.500 3.300 9H0l4.200-4.500z" fill="#fff" stroke="#6e2f2a" strokeWidth=".5" /></svg></DlgButton>
          </DlgButtons>
        </DialogTitle>
        <DialogHeader>
          <HeaderTitle>Language</HeaderTitle>
          <XamppLogo />
        </DialogHeader>
        <DialogBody>
          <BodyText>XAMPP Control Panel for Windows supports different languages.</BodyText>
          <FormRow>
            Language
            <Select>English<SelectCaret /></Select>
          </FormRow>
          <Brand>VMware InstallBuilder<BrandRule /></Brand>
          <DialogActions>
            <DlgAction>&lt; Back</DlgAction>
            <DlgAction $focus>Next &gt;</DlgAction>
            <DlgAction>Cancel</DlgAction>
          </DialogActions>
        </DialogBody>
      </Dialog>
    </Page>
  );
}
